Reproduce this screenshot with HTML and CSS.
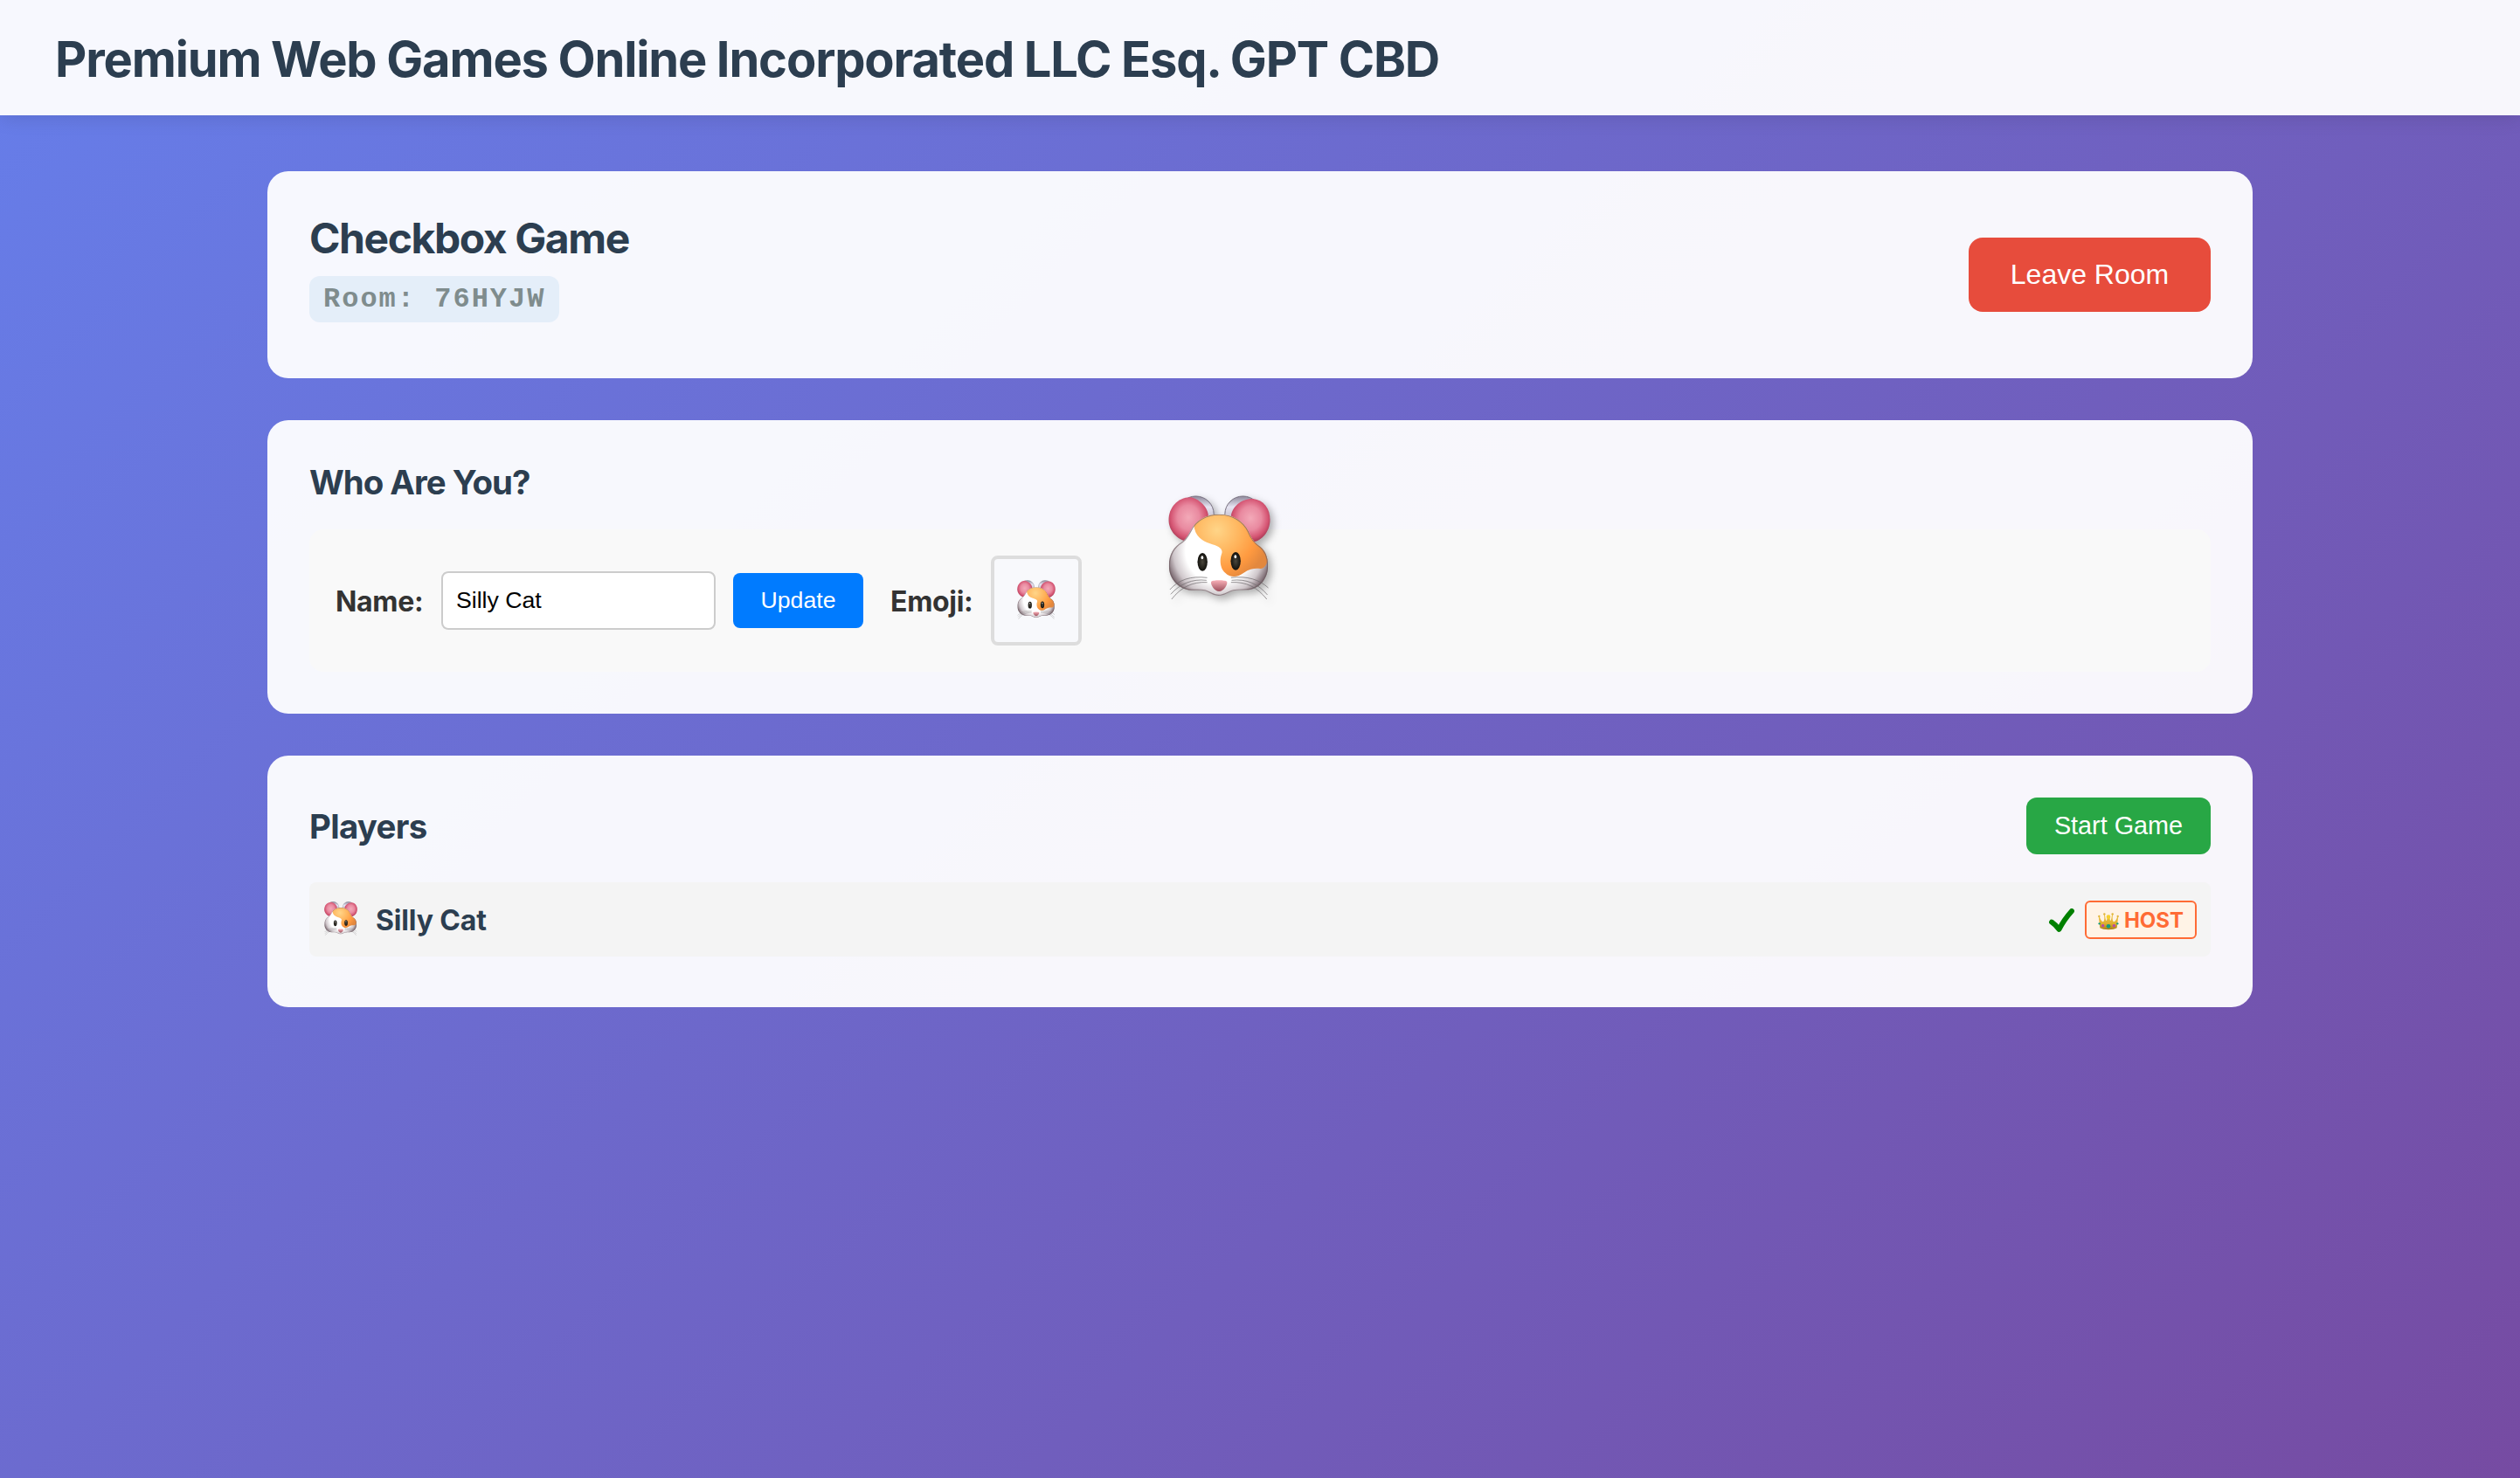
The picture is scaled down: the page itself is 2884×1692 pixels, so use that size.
FILE: index.html
```html
<!DOCTYPE html>
<html lang="en">
<head>
<meta charset="utf-8">
<title>Checkbox Game</title>
<link rel="stylesheet" href="styles.css">
</head>
<body>
<svg class="defs" aria-hidden="true">
  <defs>
    <radialGradient id="ear" cx=".5" cy=".45" r=".55"><stop offset="0" stop-color="#f3a9b8"/><stop offset=".5" stop-color="#e98aa0"/><stop offset=".82" stop-color="#d45472"/><stop offset="1" stop-color="#a93a55"/></radialGradient>
    <linearGradient id="earBack" x1="0" y1="0" x2="0" y2="1"><stop offset="0" stop-color="#8e889a"/><stop offset=".3" stop-color="#e6e4f2"/><stop offset="1" stop-color="#9a93a3"/></linearGradient>
    <radialGradient id="face" gradientUnits="userSpaceOnUse" cx="285" cy="270" r="182"><stop offset="0" stop-color="#fff"/><stop offset=".62" stop-color="#fff"/><stop offset=".85" stop-color="#cfc7cb"/><stop offset="1" stop-color="#7d6c73"/></radialGradient>
    <radialGradient id="fur" gradientUnits="userSpaceOnUse" cx="280" cy="200" r="180"><stop offset="0" stop-color="#ffd588"/><stop offset=".45" stop-color="#ffb45c"/><stop offset=".75" stop-color="#ff9a40"/><stop offset="1" stop-color="#e3883e"/></radialGradient>
    <radialGradient id="eye" cx=".5" cy=".5" r=".5"><stop offset="0" stop-color="#4a463c"/><stop offset="1" stop-color="#12110d"/></radialGradient>
    <linearGradient id="nose" x1="0" y1="0" x2="0" y2="1"><stop offset="0" stop-color="#f9b0b8"/><stop offset="1" stop-color="#9c4f5c"/></linearGradient>
    <linearGradient id="gold" x1="0" y1="0" x2="0" y2="1"><stop offset="0" stop-color="#f0c548"/><stop offset=".6" stop-color="#dfb030"/><stop offset="1" stop-color="#a87c18"/></linearGradient>
    <clipPath id="head"><path d="M288 145C335 145 372 170 388 204C398 229 408 243 428 256C444 268 455 290 455 322C455 366 426 404 380 405C362 406 350 406 336 408C316 414 306 425 286 425C266 425 256 414 238 408C222 405 208 407 192 406C146 402 115 366 115 322C115 282 132 257 160 240C176 228 182 214 190 200C206 168 240 145 288 145Z"/></clipPath>
    <symbol id="hamster" viewBox="113 80 350 360">
      <circle cx="207" cy="145" r="62" fill="url(#earBack)" stroke="#77707f" stroke-width="3"/>
      <circle cx="369" cy="145" r="62" fill="url(#earBack)" stroke="#77707f" stroke-width="3"/>
      <path d="M190 87C222 94 250 124 250 152L180 240C140 232 114 200 114 164C114 124 144 86 190 87Z" fill="url(#ear)"/>
      <path d="M404 92C440 96 462 126 462 164C462 204 434 236 404 240L328 150C332 120 364 90 404 92Z" fill="url(#ear)"/>
      <g clip-path="url(#head)">
        <rect x="110" y="140" width="350" height="290" fill="url(#face)"/>
        <path d="M200 180C204 222 228 236 256 246C282 254 302 262 296 280C288 300 290 332 308 346C326 364 350 362 372 346C392 332 412 330 428 332C440 334 450 320 456 300L456 130H200Z" fill="url(#fur)"/>
        <path d="M288 145C335 145 372 170 388 204C398 229 408 243 428 256C444 268 455 290 455 322C455 366 426 404 380 405C362 406 350 406 336 408C316 414 306 425 286 425C266 425 256 414 238 408C222 405 208 407 192 406C146 402 115 366 115 322C115 282 132 257 160 240C176 228 182 214 190 200C206 168 240 145 288 145Z" fill="none" stroke="#6d5a60" stroke-opacity=".65" stroke-width="7"/>
      </g>
      <ellipse cx="230" cy="309" rx="17" ry="31" fill="url(#eye)"/><ellipse cx="229" cy="294" rx="4" ry="6" fill="#fff"/>
      <ellipse cx="344" cy="306" rx="17" ry="31" fill="url(#eye)"/><ellipse cx="343" cy="291" rx="4" ry="6" fill="#fff"/>
      <path d="M260 376C266 370 308 370 314 376C318 386 302 410 287 410C272 410 256 386 260 376Z" fill="url(#nose)"/>
      <path d="M246 363C190 356 148 370 118 404M244 372C196 366 152 384 121 420M246 379C196 376 156 396 124 437M328 363C384 356 426 370 456 398M330 372C380 366 422 384 453 422M328 379C380 376 418 396 451 437" fill="none" stroke="#6e6a6c" stroke-opacity=".7" stroke-width="3"/>
    </symbol>
    <symbol id="crown" viewBox="0 0 72 60">
      <path d="M7 52C5 38 4 24 2 12L5 12C8 22 12 30 18 31C23 27 23 14 20 5L24 5C25 18 27 27 30 27C31 20 32 14 36 11C40 14 41 20 42 27C45 27 47 18 48 5L52 5C49 14 49 27 54 31C60 30 64 22 67 12L70 12C68 24 67 38 65 52C54 60 18 60 7 52Z" fill="url(#gold)"/>
      <circle cx="22" cy="4" r="3.5" fill="#e0b43a"/><circle cx="50" cy="4" r="3.5" fill="#e0b43a"/><circle cx="4" cy="12" r="3.5" fill="#e0b43a"/><circle cx="68" cy="12" r="3.5" fill="#e0b43a"/><circle cx="36" cy="14" r="7" fill="#f5d02f"/>
      <circle cx="36" cy="46" r="7" fill="#149c7d"/><circle cx="17" cy="44" r="5" fill="#b846ac"/><circle cx="55" cy="44" r="5" fill="#b846ac"/><circle cx="5" cy="37" r="3.5" fill="#149c7d"/><circle cx="67" cy="37" r="3.5" fill="#149c7d"/>
    </symbol>
  </defs>
</svg>
<header class="topbar"><h1 class="brand">Premium Web Games Online Incorporated LLC Esq. GPT CBD</h1></header>
<main class="page">
  <section class="card room">
    <div class="room-info">
      <h2 class="room-title">Checkbox Game</h2>
      <span class="room-code">Room: 76HYJW</span>
    </div>
    <button class="btn leave">Leave Room</button>
  </section>
  <section class="card who">
    <h3 class="title who-title">Who Are You?</h3>
    <div class="panel">
      <label class="label" for="name">Name:</label>
      <input class="name" id="name" type="text" value="Silly Cat">
      <button class="btn update">Update</button>
      <span class="label emoji-label">Emoji:</span>
      <button class="emoji-box"><svg class="emoji"><use href="#hamster"/></svg></button>
      <svg class="big-emoji"><use href="#hamster"/></svg>
    </div>
  </section>
  <section class="card players">
    <div class="players-head"><h3 class="title">Players</h3><button class="btn start">Start Game</button></div>
    <div class="player">
      <svg class="avatar"><use href="#hamster"/></svg>
      <span class="player-name">Silly Cat</span>
      <svg class="check" viewBox="0 0 29 28"><path d="M3 15.5Q7.5 18.5 11.5 24Q17 13 26 3"/></svg>
      <span class="host"><svg class="crown"><use href="#crown"/></svg>HOST</span>
    </div>
  </section>
</main>
</body>
</html>
```
FILE: styles.css
```css
* { box-sizing: border-box; margin: 0; }

body {
  min-height: 100vh;
  font-family: Inter, "Liberation Sans", sans-serif;
  color: #333;
  background: linear-gradient(135deg, #667eea 0%, #764ba2 100%) fixed;
}

.defs { position: absolute; width: 0; height: 0; }

.topbar {
  height: 132px;
  padding: 4px 63px 0;
  display: flex;
  align-items: center;
  background: rgba(255, 255, 255, .95);
  box-shadow: 0 4px 20px rgba(0, 0, 0, .1);
}

.brand {
  font-size: 56px;
  font-weight: 650;
  line-height: 68px;
  letter-spacing: -1.14px;
  word-spacing: -.5px;
  color: #2c3e50;
  white-space: nowrap;
}

.page {
  width: 2272px;
  margin: 64px auto 0;
  display: flex;
  flex-direction: column;
  gap: 48px;
}

.card {
  padding: 48px;
  border-radius: 24px;
  background: rgba(255, 255, 255, .95);
}

.room { height: 237px; display: flex; align-items: center; justify-content: space-between; }
.who { height: 336px; }
.players { height: 288px; }

.room-info { height: 141px; display: flex; flex-direction: column; align-items: flex-start; }
.room-title {
  margin-bottom: 14px;
  font-size: 48px;
  font-weight: 700;
  line-height: 58px;
  letter-spacing: -1.42px;
  color: #2c3e50;
}
.room-code {
  height: 53px;
  padding: 0 16px;
  border-radius: 12px;
  background: #e4eef9;
  color: #7f8c8d;
  font: 700 32px/54px "Liberation Mono", "Courier New", monospace;
  letter-spacing: 2px;
}

.title { font-size: 38.4px; font-weight: 700; line-height: 46px; letter-spacing: -.7px; color: #2c3e50; }
.who-title { letter-spacing: -1px; }

.btn { border: 0; padding: 0; color: #fff; font-family: "Liberation Sans", Arial, sans-serif; }
.leave { width: 277px; height: 85px; border-radius: 16px; background: #e74c3c; font-size: 32px; }
.update { width: 149px; height: 63px; margin-left: 20px; border-radius: 8px; background: #007bff; font-size: 26.67px; }
.start { width: 211px; height: 65px; border-radius: 12px; background: #28a745; font-size: 28.8px; }

.panel {
  position: relative;
  height: 163px;
  margin-top: 31px;
  padding: 0 30px;
  display: flex;
  align-items: center;
  border-radius: 16px;
  background: #f9f9f9;
}
.label { width: 121px; padding-top: 2px; font-size: 32px; font-weight: 700; letter-spacing: -.3px; }
.emoji-label { width: 115px; margin-left: 31px; }
.name {
  width: 314px;
  height: 67px;
  padding: 0 15px;
  border: 2px solid #ccc;
  border-radius: 8px;
  background: #fff;
  color: #000;
  font: 26.67px "Liberation Sans", Arial, sans-serif;
}
.emoji-box {
  width: 104px;
  height: 103px;
  padding: 0;
  display: flex;
  align-items: center;
  justify-content: center;
  border: 4px solid #ddd;
  border-radius: 8px;
  background: #f8f9fc;
}
.emoji { width: 44px; height: 45px; margin-top: -3px; }
.big-emoji {
  position: absolute;
  left: 983px;
  top: -39px;
  width: 117px;
  height: 120px;
  filter: drop-shadow(4px 4px 4px rgba(0, 0, 0, .3));
}

.players-head { height: 65px; display: flex; align-items: center; justify-content: space-between; }
.player {
  height: 85px;
  margin-top: 32px;
  padding: 0 16px;
  display: flex;
  align-items: center;
  border-radius: 8px;
  background: #f4f4f4;
}
.avatar { width: 38px; height: 39px; margin: 0 0 2px 1px; }
.player-name { margin-left: 21px; padding-top: 2px; font-size: 32px; font-weight: 700; letter-spacing: -.15px; color: #2c3e50; }
.check {
  width: 29px;
  height: 28px;
  margin: 2px 0 0 auto;
  fill: none;
  stroke: #008000;
  stroke-width: 5.8;
  stroke-linecap: round;
  stroke-linejoin: round;
}
.host {
  width: 128px;
  height: 44px;
  margin: 1px 0 0 12px;
  display: flex;
  align-items: center;
  justify-content: center;
  gap: 6px;
  border: 2px solid #ff6b35;
  border-radius: 6px;
  background: #fff3e6;
  color: #ff6b35;
  font-size: 24px;
  font-weight: 700;
}
.crown { width: 24px; height: 20px; margin-top: 3px; }
```
